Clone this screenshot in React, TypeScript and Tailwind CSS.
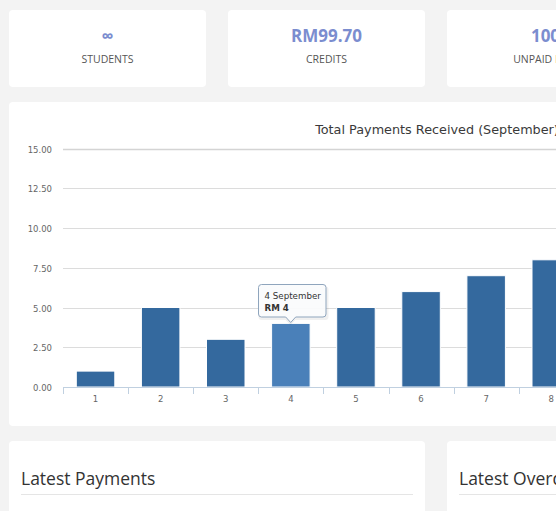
import React from 'react';

const stats = [
  { value: '∞', label: 'STUDENTS' },
  { value: 'RM99.70', label: 'CREDITS' },
  { value: '100', label: 'UNPAID FEES' },
  { value: '12', label: 'CLASSES' },
];

const payments = [1, 5, 3, 4, 5, 6, 7, 8, 6, 4, 9, 5];

// chart geometry (relative to the chart card)
const PLOT_LEFT = 54;
const PLOT_RIGHT = 835;
const Y0 = 285;
const UNIT = 15.9;
const CAT_W = 65.1;
const BAR_W = 38.5;
const HOVER = 3;

const chartFont = '"DejaVu Sans", Verdana, sans-serif';

const PaymentsChart = () => {
  const ticks = [0, 2.5, 5, 7.5, 10, 12.5, 15];

  return (
    <svg width="854" height="324" className="block">
      <text
        x="428"
        y="31.5"
        textAnchor="middle"
        fontFamily={chartFont}
        fontSize="12.8"
        fill="#3a3a3a"
      >
        Total Payments Received (September)
      </text>

      {ticks.map((t) => {
        const y = Math.round(Y0 - t * UNIT) + 0.5;
        return (
          <g key={t}>
            {t > 0 && (
              <line
                x1={PLOT_LEFT}
                x2={PLOT_RIGHT}
                y1={y}
                y2={y}
                stroke={t === 15 ? '#d4d4d4' : '#dcdcdc'}
                strokeWidth={t === 15 ? 1.5 : 1}
              />
            )}
            <text
              x="43"
              y={y + 3}
              textAnchor="end"
              fontFamily={chartFont}
              fontSize="8.5"
              fill="#666"
            >
              {t.toFixed(2)}
            </text>
          </g>
        );
      })}

      {payments.map((v, i) => {
        const start = PLOT_LEFT + i * CAT_W;
        const h = v * UNIT;
        return (
          <g key={i}>
            <rect
              x={start + 13.3}
              y={Y0 - h}
              width={BAR_W}
              height={h}
              fill={i === HOVER ? '#4a80b9' : '#34699e'}
              stroke="#fff"
              strokeWidth="1"
            />
            <text
              x={start + CAT_W / 2}
              y="300"
              textAnchor="middle"
              fontFamily={chartFont}
              fontSize="8.5"
              fill="#666"
            >
              {i + 1}
            </text>
          </g>
        );
      })}

      <line x1={PLOT_LEFT} x2={PLOT_RIGHT} y1={Y0 + 0.5} y2={Y0 + 0.5} stroke="#c0d0e0" />
      {payments.map((_, i) => {
        const x = Math.round(PLOT_LEFT + i * CAT_W) + 0.5;
        return <line key={i} x1={x} x2={x} y1={Y0} y2={Y0 + 7} stroke="#c0d0e0" />;
      })}
      <line
        x1={PLOT_RIGHT + 0.5}
        x2={PLOT_RIGHT + 0.5}
        y1={Y0}
        y2={Y0 + 7}
        stroke="#c0d0e0"
      />

      {/* tooltip */}
      <g>
        <path
          d="M252.5 184.5 h64 a3 3 0 0 1 3 3 v27.5 a3 3 0 0 1 -3 3 h-30 l-5 5 l-5 -5 h-24 a3 3 0 0 1 -3 -3 v-27.5 a3 3 0 0 1 3 -3 z"
          fill="#000"
          opacity="0.06"
        />
        <path
          d="M252.5 182.5 h61.5 a3 3 0 0 1 3 3 v26.5 a3 3 0 0 1 -3 3 h-27.3 l-5 5.5 l-5 -5.5 h-24.2 a3 3 0 0 1 -3 -3 v-26.5 a3 3 0 0 1 3 -3 z"
          fill="#fafbfc"
          fillOpacity="0.95"
          stroke="#8fa5bd"
          strokeWidth="1"
        />
        <text x="255.5" y="197.3" fontFamily={chartFont} fontSize="8.7" fill="#333">
          4 September
        </text>
        <text
          x="255.5"
          y="208.5"
          fontFamily={chartFont}
          fontSize="8.7"
          fontWeight="bold"
          fill="#333"
        >
          RM 4
        </text>
      </g>
    </svg>
  );
};

const App = () => {
  return (
    <div
      className="w-full h-[511px] overflow-hidden bg-[#f3f3f3]"
      style={{ fontFamily: '"Open Sans", "Noto Sans", sans-serif' }}
    >
      <div className="w-[872px] px-[9px] pt-[10px]">
        <div className="grid grid-cols-[repeat(4,197px)] gap-x-[22px]">
          {stats.map((s) => (
            <div
              key={s.label}
              className="h-[77px] bg-white rounded-[4px] flex flex-col items-center pt-[15px]"
            >
              <div className="text-[17px] leading-[22px] font-bold text-[#7b8dcf]">
                {s.value}
              </div>
              <div className="mt-[5px] text-[10.5px] leading-[14px] text-[#555]">
                {s.label}
              </div>
            </div>
          ))}
        </div>

        <div className="mt-[15px] h-[324px] bg-white rounded-[4px]">
          <PaymentsChart />
        </div>

        <div className="mt-[15px] grid grid-cols-[416px_416px] gap-x-[22px]">
          <div className="h-[300px] bg-white rounded-[4px] px-[12px] pt-[25px]">
            <h3 className="text-[17.5px] leading-[24px] text-[#333] pb-[4px] border-b border-[#e5e5e5]">
              Latest Payments
            </h3>
          </div>
          <div className="h-[300px] bg-white rounded-[4px] px-[12px] pt-[25px]">
            <h3 className="text-[17.5px] leading-[24px] text-[#333] pb-[4px] border-b border-[#e5e5e5]">
              Latest Overdue Bills
            </h3>
          </div>
        </div>
      </div>
    </div>
  );
};

export default App;
